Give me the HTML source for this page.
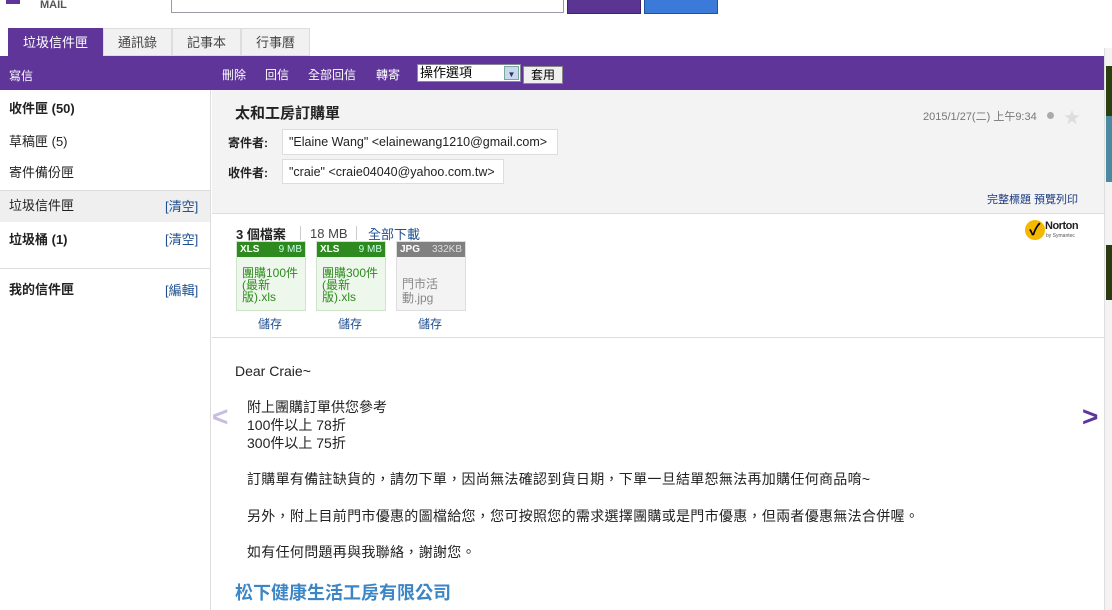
<!DOCTYPE html>
<html><head><meta charset="utf-8"><style>
*{margin:0;padding:0;box-sizing:border-box}
body{width:1112px;height:610px;overflow:hidden;background:#fff;font-family:"Liberation Sans","Noto Sans CJK TC",sans-serif;font-size:13px;color:#222;position:relative}
.a{position:absolute;white-space:nowrap}
.lnk{color:#1f4f8f}
</style></head><body>
<div class="a" style="left:40px;top:-1px;font-size:11px;font-weight:bold;color:#555">MAIL</div>
<div class="a" style="left:6px;top:0;width:14px;height:4px;background:#5f3599"></div>
<div class="a" style="left:171px;top:-2px;width:393px;height:15px;border:1px solid #99a;background:#fff"></div>
<div class="a" style="left:567px;top:-2px;width:74px;height:16px;background:#5b3592;border:1px solid #402070"></div>
<div class="a" style="left:644px;top:-2px;width:74px;height:16px;background:#3b7ad9;border:1px solid #2050a0"></div>
<!-- tabs -->
<div class="a" style="left:8px;top:28px;width:95px;height:28px;background:#5f3599;color:#fff;text-align:center;line-height:30px">垃圾信件匣</div>
<div class="a" style="left:103px;top:28px;width:69px;height:28px;background:#f1f1f1;border:1px solid #ddd;text-align:center;line-height:28px;color:#444">通訊錄</div>
<div class="a" style="left:172px;top:28px;width:69px;height:28px;background:#f1f1f1;border:1px solid #ddd;text-align:center;line-height:28px;color:#444">記事本</div>
<div class="a" style="left:241px;top:28px;width:69px;height:28px;background:#f1f1f1;border:1px solid #ddd;text-align:center;line-height:28px;color:#444">行事曆</div>
<!-- purple bar -->
<div class="a" style="left:0;top:56px;width:1104px;height:34px;background:#5f3599;color:#fff;font-size:12px">
<span class="a" style="left:9px;top:11px">寫信</span>
<span class="a" style="left:222px;top:10px">刪除</span>
<span class="a" style="left:265px;top:10px">回信</span>
<span class="a" style="left:308px;top:10px">全部回信</span>
<span class="a" style="left:376px;top:10px">轉寄</span>
<div class="a" style="left:417px;top:8px;width:104px;height:18px;background:#fff;border:1px solid #889;color:#000;font-size:13px;line-height:16px;padding-left:2px">操作選項<span class="a" style="right:1px;top:1px;width:15px;height:14px;background:#c8d8f0;border:1px solid #7a9;font-size:8px;text-align:center;color:#335">▼</span></div>
<div class="a" style="left:523px;top:10px;width:40px;height:18px;background:#f0f0f0;border:1px solid #888;color:#000;text-align:center;line-height:16px">套用</div>
</div>
<!-- sidebar -->
<div class="a" style="left:0;top:90px;width:211px;height:520px;border-right:1px solid #ddd;font-size:13px">
<div class="a" style="left:9px;top:8px;font-weight:bold">收件匣 (50)</div>
<div class="a" style="left:9px;top:41px">草稿匣 (5)</div>
<div class="a" style="left:9px;top:72px">寄件備份匣</div>
<div class="a" style="left:0;top:100px;width:210px;height:32px;background:#efefef;border-top:1px solid #ddd"></div>
<div class="a" style="left:9px;top:105px">垃圾信件匣</div><div class="a lnk" style="left:165px;top:106px">[清空]</div>
<div class="a" style="left:9px;top:139px;font-weight:bold">垃圾桶 (1)</div><div class="a lnk" style="left:165px;top:139px">[清空]</div>
<div class="a" style="left:0;top:178px;width:210px;border-top:1px solid #ddd"></div>
<div class="a" style="left:9px;top:189px;font-weight:bold">我的信件匣</div><div class="a lnk" style="left:165px;top:190px">[編輯]</div>
</div>
<!-- header -->
<div class="a" style="left:212px;top:90px;width:892px;height:124px;background:#f3f3f3;border-bottom:1px solid #ddd">
<div class="a" style="left:23px;top:12px;font-size:15px;font-weight:bold">太和工房訂購單</div>
<div class="a" style="left:16px;top:44px;font-weight:bold;font-size:12px">寄件者:</div>
<div class="a" style="left:70px;top:39px;width:276px;height:26px;background:#fff;border:1px solid #ddd;padding:5px 0 0 6px;font-size:12.5px;overflow:hidden">"Elaine Wang" &lt;elainewang1210@gmail.com&gt;</div>
<div class="a" style="left:16px;top:74px;font-weight:bold;font-size:12px">收件者:</div>
<div class="a" style="left:70px;top:69px;width:222px;height:25px;background:#fff;border:1px solid #ddd;padding:5px 0 0 6px;font-size:12.5px;overflow:hidden">"craie" &lt;craie04040@yahoo.com.tw&gt;</div>
<div class="a" style="left:711px;top:18px;font-size:11px;color:#777">2015/1/27(二) 上午9:34</div>
<div class="a" style="left:835px;top:22px;width:7px;height:7px;border-radius:50%;background:#aaa"></div>
<div class="a" style="left:852px;top:14px;color:#ddd;font-size:16px">★</div>
<div class="a lnk" style="left:775px;top:101px;font-size:11px;color:#1a3a80">完整標題 預覽列印</div>
</div>
<!-- attachments -->
<div class="a" style="left:212px;top:214px;width:892px;height:124px;border-bottom:1px solid #ddd">
<div class="a" style="left:24px;top:10px;font-weight:bold">3 個檔案</div>
<div class="a" style="left:88px;top:12px;height:14px;border-left:1px solid #ccc"></div>
<div class="a" style="left:98px;top:12px;color:#444">18 MB</div>
<div class="a" style="left:144px;top:12px;height:14px;border-left:1px solid #ccc"></div>
<div class="a lnk" style="left:156px;top:10px">全部下載</div>
<div class="a" style="left:24px;top:27px;width:70px;height:70px;border:1px solid #cde4c8;background:#eef7ec">
<div style="background:#2e8a1e;color:#fff;font-size:10px;height:15px;line-height:15px;padding:0 3px"><b>XLS</b><span style="float:right;color:#cfe">9 MB</span></div>
<div style="color:#2e8a1e;font-size:12px;line-height:12px;padding:10px 0 0 5px">團購100件<br>(最新<br>版).xls</div></div>
<div class="a lnk" style="left:46px;top:101px;font-size:12px">儲存</div>
<div class="a" style="left:104px;top:27px;width:70px;height:70px;border:1px solid #cde4c8;background:#eef7ec">
<div style="background:#2e8a1e;color:#fff;font-size:10px;height:15px;line-height:15px;padding:0 3px"><b>XLS</b><span style="float:right;color:#cfe">9 MB</span></div>
<div style="color:#2e8a1e;font-size:12px;line-height:12px;padding:10px 0 0 5px">團購300件<br>(最新<br>版).xls</div></div>
<div class="a lnk" style="left:126px;top:101px;font-size:12px">儲存</div>
<div class="a" style="left:184px;top:27px;width:70px;height:70px;border:1px solid #ddd;background:#f3f3f3">
<div style="background:#808080;color:#fff;font-size:10px;height:15px;line-height:15px;padding:0 3px"><b>JPG</b><span style="float:right;color:#ddd">332KB</span></div>
<div style="color:#888;font-size:12px;line-height:14px;padding:20px 0 0 5px">門市活<br>動.jpg</div></div>
<div class="a lnk" style="left:206px;top:101px;font-size:12px">儲存</div>
<div class="a" style="left:813px;top:6px;width:20px;height:20px;border-radius:50%;background:#f5b800"></div>
<div class="a" style="left:817px;top:2px;font-size:16px;font-weight:bold;color:#000">✓</div>
<div class="a" style="left:833px;top:6px;font-size:11px;font-weight:bold;letter-spacing:-0.5px">Norton</div>
<div class="a" style="left:834px;top:19px;font-size:5px;color:#555">by Symantec</div>
</div>
<!-- body -->
<div class="a" style="left:212px;top:338px;width:892px;height:272px;font-size:14px;color:#222">
<div class="a" style="left:23px;top:25px">Dear Craie~</div>
<div class="a" style="left:35px;top:60px;line-height:18px">附上團購訂單供您參考<br>100件以上 78折<br>300件以上 75折</div>
<div class="a" style="left:35px;top:131px;letter-spacing:0.3px">訂購單有備註缺貨的，請勿下單，因尚無法確認到貨日期，下單一旦結單恕無法再加購任何商品唷~</div>
<div class="a" style="left:35px;top:168px;letter-spacing:0.3px">另外，附上目前門市優惠的圖檔給您，您可按照您的需求選擇團購或是門市優惠，但兩者優惠無法合併喔。</div>
<div class="a" style="left:35px;top:204px;letter-spacing:0.3px">如有任何問題再與我聯絡，謝謝您。</div>
<div class="a" style="left:23px;top:241px;font-size:18px;font-weight:bold;color:#3d86c6">松下健康生活工房有限公司</div>
<div class="a" style="left:0;top:63px;font-size:28px;color:#c8bde0;font-weight:bold">&lt;</div>
<div class="a" style="left:870px;top:63px;font-size:28px;color:#5f3599;font-weight:bold">&gt;</div>
</div>
<!-- right strip -->
<div class="a" style="left:1104px;top:48px;width:8px;height:562px;background:#f3f3f3;border-left:1px solid #ddd"></div>
<div class="a" style="left:1106px;top:66px;width:6px;height:50px;background:#2b4010"></div>
<div class="a" style="left:1106px;top:116px;width:6px;height:66px;background:#4a8aa0"></div>
<div class="a" style="left:1106px;top:245px;width:6px;height:55px;background:#2b3a10"></div>
</body></html>
